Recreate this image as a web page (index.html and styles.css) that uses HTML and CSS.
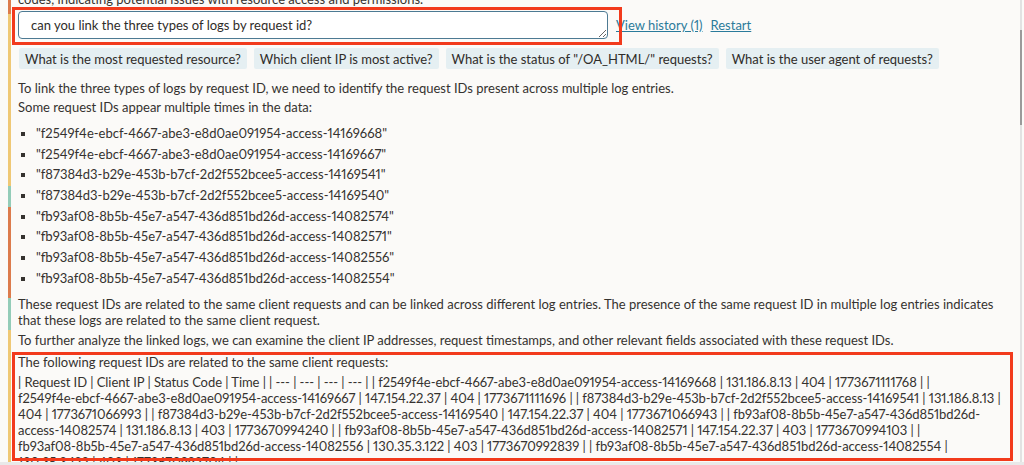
FILE: index.html
```html
<!DOCTYPE html>
<html lang="en">
<head>
<meta charset="utf-8">
<title>Log assistant</title>
<link rel="stylesheet" href="styles.css">
</head>
<body>
<div class="page">
  <div class="rail">
    <span class="seg seg-orange seg-a"></span>
    <span class="seg seg-yellow seg-b"></span>
    <span class="seg seg-teal seg-c"></span>
    <span class="seg seg-orange seg-d"></span>
    <span class="seg seg-teal seg-e"></span>
    <span class="seg seg-yellow seg-f"></span>
  </div>
  <main class="content">
    <p class="para prev">codes, indicating potential issues with resource access and permissions.</p>
    <div class="ask-row">
      <textarea class="ask" rows="1">can you link the three types of logs by request id?</textarea>
      <a class="link" href="#">View history (1)</a>
      <a class="link" href="#">Restart</a>
      <span class="highlight highlight-ask"></span>
    </div>
    <div class="chips">
      <span class="chip">What is the most requested resource?</span>
      <span class="chip">Which client IP is most active?</span>
      <span class="chip">What is the status of "/OA_HTML/" requests?</span>
      <span class="chip">What is the user agent of requests?</span>
    </div>
    <p class="para first">To link the three types of logs by request ID, we need to identify the request IDs present across multiple log entries.</p>
    <p class="para tight">Some request IDs appear multiple times in the data:</p>
    <ul class="ids">
      <li>"f2549f4e-ebcf-4667-abe3-e8d0ae091954-access-14169668"</li>
      <li>"f2549f4e-ebcf-4667-abe3-e8d0ae091954-access-14169667"</li>
      <li>"f87384d3-b29e-453b-b7cf-2d2f552bcee5-access-14169541"</li>
      <li>"f87384d3-b29e-453b-b7cf-2d2f552bcee5-access-14169540"</li>
      <li>"fb93af08-8b5b-45e7-a547-436d851bd26d-access-14082574"</li>
      <li>"fb93af08-8b5b-45e7-a547-436d851bd26d-access-14082571"</li>
      <li>"fb93af08-8b5b-45e7-a547-436d851bd26d-access-14082556"</li>
      <li>"fb93af08-8b5b-45e7-a547-436d851bd26d-access-14082554"</li>
    </ul>
    <p class="para">These request IDs are related to the same client requests and can be linked across different log entries. The presence of the same request ID in multiple log entries indicates that these logs are related to the same client request.</p>
    <p class="para">To further analyze the linked logs, we can examine the client IP addresses, request timestamps, and other relevant fields associated with these request IDs.</p>
    <div class="answer">
      <span class="highlight highlight-answer"></span>
      <p class="para">The following request IDs are related to the same client requests:</p>
      <p class="para table-text">| Request ID | Client IP | Status Code | Time | | --- | --- | --- | --- | | f2549f4e-ebcf-4667-abe3-e8d0ae091954-access-14169668 | 131.186.8.13 | 404 | 1773671111768 | |<br>f2549f4e-ebcf-4667-abe3-e8d0ae091954-access-14169667 | 147.154.22.37 | 404 | 1773671111696 | | f87384d3-b29e-453b-b7cf-2d2f552bcee5-access-14169541 | 131.186.8.13 |<br>404 | 1773671066993 | | f87384d3-b29e-453b-b7cf-2d2f552bcee5-access-14169540 | 147.154.22.37 | 404 | 1773671066943 | | fb93af08-8b5b-45e7-a547-436d851bd26d-<br>access-14082574 | 131.186.8.13 | 403 | 1773670994240 | | fb93af08-8b5b-45e7-a547-436d851bd26d-access-14082571 | 147.154.22.37 | 403 | 1773670994103 | |<br>fb93af08-8b5b-45e7-a547-436d851bd26d-access-14082556 | 130.35.3.122 | 403 | 1773670992839 | | fb93af08-8b5b-45e7-a547-436d851bd26d-access-14082554 |<br>130.35.3.122 | 403 | 1773670992704 | |</p>
    </div>
  </main>
  <div class="scrolltrack"><span class="thumb"></span></div>
</div>
<div class="bottombar"></div>
</body>
</html>
```

FILE: styles.css
```css
html, body {
  margin: 0;
  padding: 0;
  height: 100%;
  overflow: hidden;
  background: #fbfaf8;
}

body {
  font-family: Lato, "Liberation Sans", sans-serif;
  font-size: 13px;
  color: #35322f;
  font-variant-numeric: proportional-nums;
}

.page {
  display: flex;
  height: 465px;
  overflow: hidden;
}

.rail {
  display: flex;
  flex-direction: column;
  width: 3px;
  margin-left: 8px;
  flex: none;
}

.seg { display: block; flex: none; }
.seg-orange { background: #dc7b4c; }
.seg-yellow { background: #efc875; }
.seg-teal { background: #93ccb8; }
.seg-a { height: 14px; }
.seg-b { height: 172px; }
.seg-c { height: 21px; }
.seg-d { height: 91px; }
.seg-e { height: 32px; }
.seg-f { height: 135px; }

.content {
  position: relative;
  flex: 1;
  min-width: 0;
  padding: 0 15px 0 7px;
  margin-top: -9px;
  display: flex;
  flex-direction: column;
}

.para {
  margin: 0 0 4px;
  line-height: 16px;
}

.prev { margin-bottom: 4px; }

.ask-row {
  position: relative;
  display: flex;
  align-items: center;
  gap: 8px;
  height: 28px;
}

.ask {
  box-sizing: border-box;
  width: 590px;
  height: 28px;
  margin: 0;
  padding: 5px 12px;
  border: 1px solid #4d7a93;
  border-radius: 4px;
  background: #fff;
  font-family: Lato, "Liberation Sans", sans-serif;
  font-size: 13px;
  line-height: 16px;
  color: #2f2c29;
  resize: vertical;
  overflow: hidden;
}

.link {
  color: #2b7b9b;
  text-decoration: underline;
  font-size: 13px;
}

.highlight {
  position: absolute;
  box-sizing: border-box;
  border: 3px solid #f23a1c;
  pointer-events: none;
  z-index: 1;
}

.highlight-ask {
  left: -6px;
  top: -4px;
  width: 610px;
  height: 38px;
}

.chips {
  display: flex;
  gap: 7px;
  margin: 9px 0 11px 1px;
}

.chip {
  display: inline-flex;
  align-items: center;
  height: 21px;
  padding: 0 6px;
  background: #e5eff2;
  border-radius: 2px;
  color: #2f2c29;
}

.first { margin-bottom: 3px; }
.tight { margin-bottom: 10px; }

.ids {
  list-style: square;
  margin: 0 0 10px;
  padding-left: 18px;
  display: flex;
  flex-direction: column;
  gap: 4.7px;
}

.ids li {
  line-height: 16px;
  padding-left: 0;
}

.table-text {
  white-space: nowrap;
  letter-spacing: -0.06px;
}

.answer {
  position: relative;
  margin-top: 2px;
}

.highlight-answer {
  left: -6px;
  top: -2px;
  right: -8px;
  height: 109px;
}

.scrolltrack {
  flex: none;
  width: 2px;
  margin-right: 2px;
  background: #e2e2e2;
  display: flex;
  flex-direction: column;
}

.thumb {
  display: block;
  margin-top: 30px;
  height: 95px;
  background: #9a9a9a;
}

.bottombar {
  position: fixed;
  left: 0;
  right: 0;
  bottom: 0;
  height: 3px;
  background: #e9e9e9;
}
```
